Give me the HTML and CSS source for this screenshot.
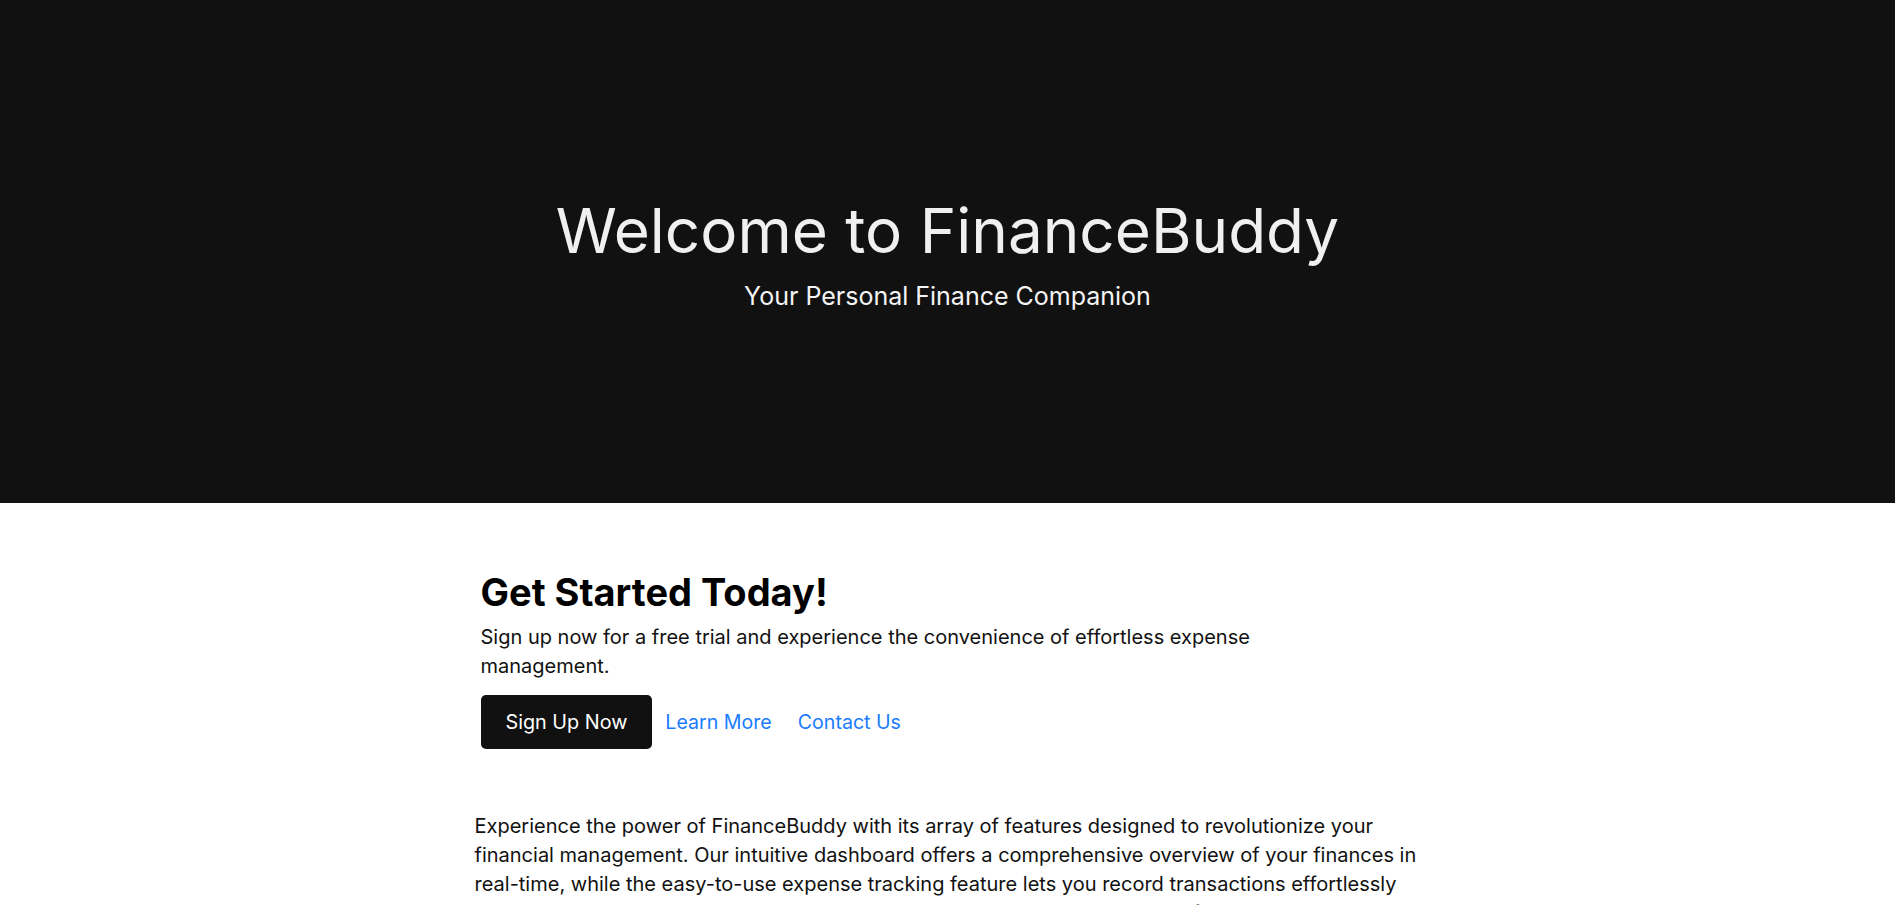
FILE: index.html
```html
<!DOCTYPE html>
<html lang="en">
<head>
<meta charset="utf-8">
<title>FinanceBuddy</title>
<link rel="stylesheet" href="styles.css">
</head>
<body>
<header class="hero">
  <h1 class="hero-title">Welcome to FinanceBuddy</h1>
  <p class="hero-sub">Your Personal Finance Companion</p>
</header>
<main class="container">
  <section class="cta">
    <h2 class="cta-title">Get Started Today!</h2>
    <p class="cta-text">Sign up now for a free trial and experience the convenience of effortless expense management.</p>
    <div class="cta-actions">
      <a class="btn" href="#">Sign Up Now</a>
      <a class="link" href="#">Learn More</a>
      <a class="link" href="#">Contact Us</a>
    </div>
  </section>
  <section class="about">
    <p>Experience the power of FinanceBuddy with its array of features designed to revolutionize your financial management. Our intuitive dashboard offers a comprehensive overview of your finances in real-time, while the easy-to-use expense tracking feature lets you record transactions effortlessly on the go. Set personalized budgets, receive timely alerts, and stay on top of your spending goals with ease.</p>
  </section>
</main>
</body>
</html>
```

FILE: styles.css
```css
* { box-sizing: border-box; }
html, body {
  margin: 0;
  padding: 0;
}
body {
  font-family: Inter, "Noto Sans", "Liberation Sans", sans-serif;
  color: #111;
  background: #fff;
}
.hero {
  background: #111111;
  height: 503px;
  display: flex;
  flex-direction: column;
  align-items: center;
  justify-content: center;
  text-align: center;
}
.hero-title {
  margin: 0;
  font-size: 62px;
  font-weight: 400;
  color: #f0f0f0;
  line-height: normal;
}
.hero-sub {
  margin: 13px 0 0;
  font-size: 25px;
  font-weight: 400;
  color: #f4f4f4;
  line-height: normal;
}
.container {
  max-width: 976px;
  margin: 0 auto;
  padding: 0 12px 0 15px;
}
.cta {
  padding: 67px 6px 0;
  max-width: 820px;
}
.cta-title {
  margin: 0;
  font-size: 38px;
  font-weight: 700;
  color: #000;
  line-height: 44px;
}
.cta-text {
  margin: 9px 0 0;
  font-size: 20px;
  line-height: 29px;
}
.cta-actions {
  margin-top: 14px;
  display: flex;
  align-items: center;
}
.btn {
  display: inline-block;
  background: #111;
  color: #fff;
  text-decoration: none;
  font-size: 19.8px;
  line-height: 30px;
  padding: 12px 25px;
  border-radius: 5px;
  margin-right: 13px;
}
.link {
  color: #1a7cff;
  text-decoration: none;
  font-size: 19.6px;
  margin-right: 26px;
}
.about {
  padding-top: 63px;
}
.about p {
  margin: 0;
  font-size: 20px;
  line-height: 29px;
}
```
